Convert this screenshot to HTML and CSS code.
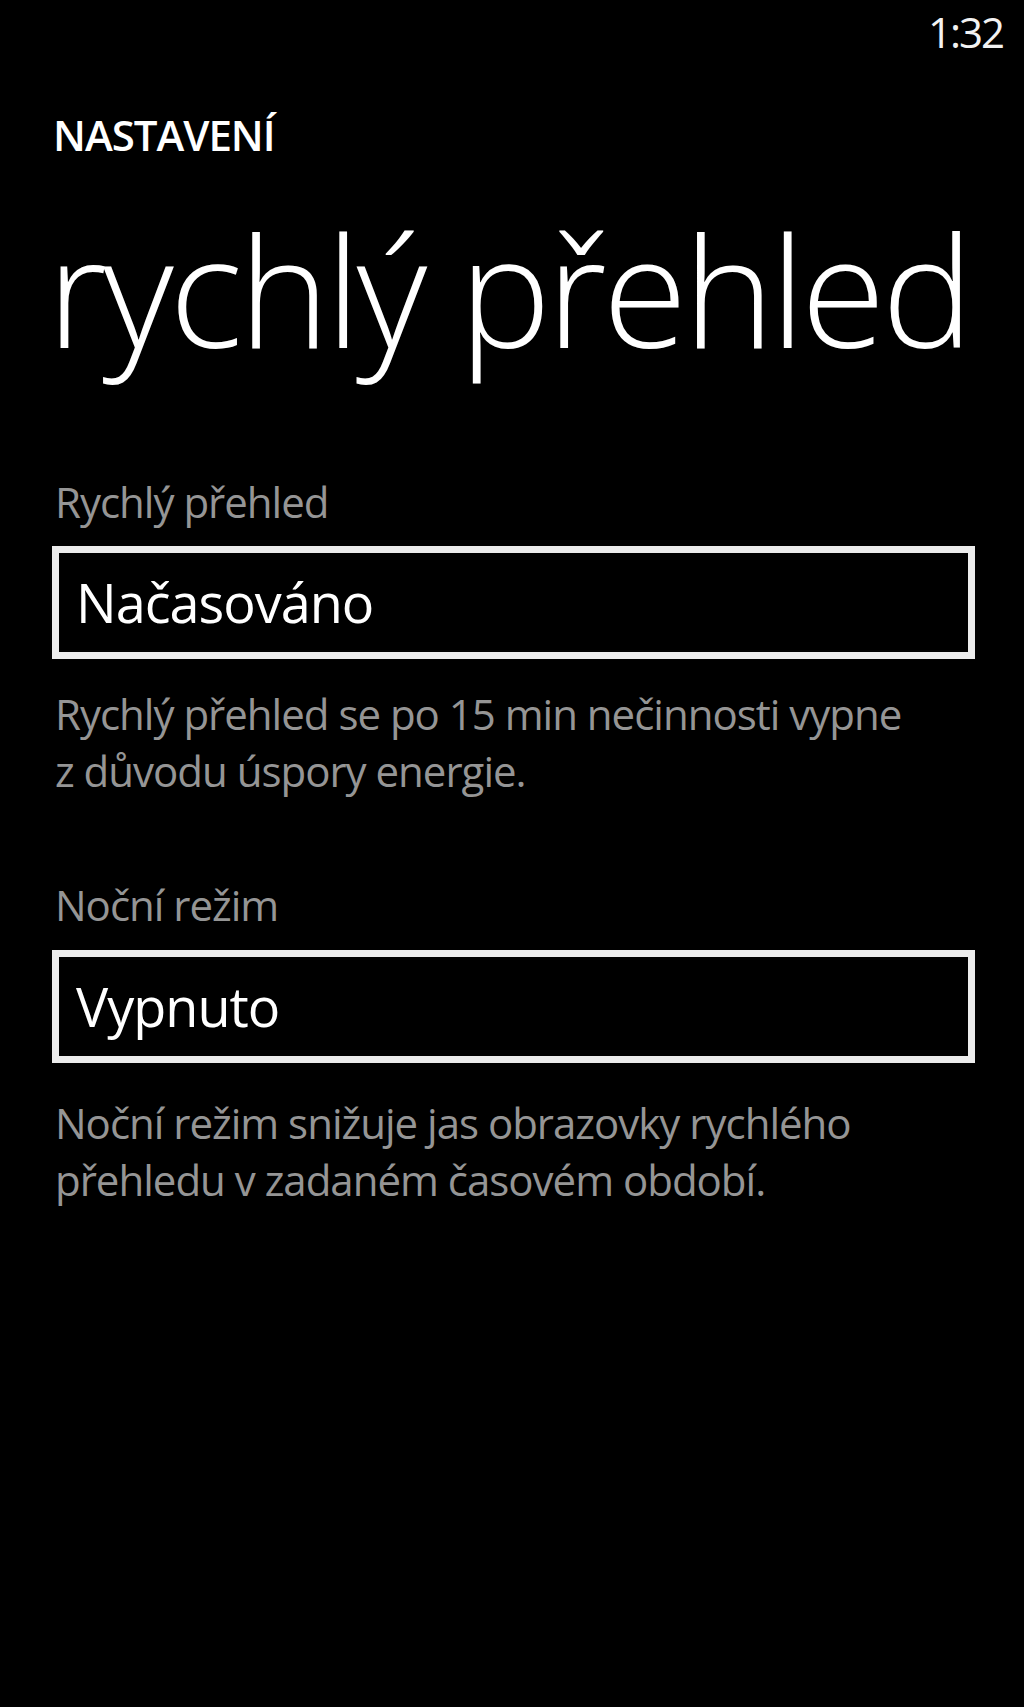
FILE: index.html
```html
<!DOCTYPE html>
<html lang="cs">
<head>
<meta charset="utf-8">
<title>rychlý přehled</title>
<link rel="stylesheet" href="styles.css">
</head>
<body>
<div class="screen">
  <div class="status"><span class="time">1:32</span></div>
  <div class="app-name">NASTAVENÍ</div>
  <h1 class="page-title">rychlý přehled</h1>

  <div class="setting first">
    <div class="label">Rychlý přehled</div>
    <div class="picker">Načasováno</div>
    <p class="desc">Rychlý přehled se po 15 min nečinnosti vypne<br>z důvodu úspory energie.</p>
  </div>

  <div class="setting second">
    <div class="label">Noční režim</div>
    <div class="picker">Vypnuto</div>
    <p class="desc">Noční režim snižuje jas obrazovky rychlého<br>přehledu v zadaném časovém období.</p>
  </div>
</div>
</body>
</html>
```

FILE: styles.css
```css
html, body {
  margin: 0;
  padding: 0;
  background: #000;
}

.screen {
  width: 1024px;
  min-height: 1707px;
  background: #000;
  color: #fff;
  font-family: "Open Sans", "Noto Sans", "Liberation Sans", sans-serif;
}

.status {
  height: 64px;
  display: flex;
  justify-content: flex-end;
  align-items: center;
  padding-right: 21px;
}

.time {
  font-size: 42px;
  line-height: 64px;
  color: #f2f2f2;
  letter-spacing: -2px;
}

.app-name {
  margin-top: 41px;
  padding-left: 53px;
  font-size: 42px;
  line-height: 60px;
  font-weight: 600;
  letter-spacing: -1px;
}

.page-title {
  margin: 33px 0 0 0;
  padding-left: 47px;
  font-size: 154px;
  line-height: 180px;
  font-weight: 300;
  letter-spacing: -4px;
}

.setting {
  padding-left: 52px;
  padding-right: 49px;
}

.setting.first {
  margin-top: 96px;
}

.setting.second {
  margin-top: 78px;
}

.label {
  padding-left: 3px;
  font-size: 42px;
  line-height: 56px;
  color: #959595;
  letter-spacing: -1px;
}

.picker {
  margin-top: 16px;
  height: 99px;
  border: 7px solid #ececec;
  padding-left: 17px;
  font-size: 54px;
  line-height: 99px;
  color: #fff;
  letter-spacing: -1px;
}

.second .picker {
  margin-top: 17px;
}

.desc {
  margin: 26px 0 0 0;
  padding-left: 3px;
  font-size: 42px;
  line-height: 57px;
  color: #959595;
  letter-spacing: -1px;
}

.second .desc {
  margin-top: 31px;
}
```
